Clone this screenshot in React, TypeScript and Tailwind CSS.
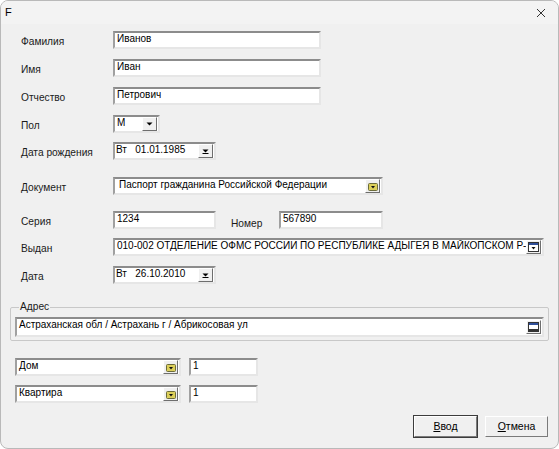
import React from "react";

const font = { fontFamily: '"Liberation Sans", Arial, sans-serif' };

const sunken =
  "bg-white border-2 border-t-[#8c8c8c] border-l-[#a0a0a0] border-b-[#e6e6e6] border-r-[#e6e6e6]";

const ArrowIcon = ({ bar }: { bar?: boolean }) => (
  <svg width="9" height="8" viewBox="0 0 9 8">
    <path d="M1.5 2.5h6L4.5 5.5z" fill="#000" />
    {bar && <rect x="1.5" y="6" width="6" height="1" fill="#000" />}
  </svg>
);

const FolderIcon = () => (
  <svg width="10" height="9" viewBox="0 0 10 9">
    <rect x="0.5" y="1.5" width="9" height="7" rx="1" fill="#dccf5a" stroke="#6b6b3a" />
    <path d="M3 4h4L5 6.5z" fill="#111" />
  </svg>
);

const WinIcon = ({ arrow }: { arrow?: boolean }) => (
  <svg width="11" height="10" viewBox="0 0 11 10">
    <rect x="0.5" y="0.5" width="10" height="9" fill="#fff" stroke="#333" />
    <rect x="1" y="1" width="9" height="2" fill="#2f4f9a" />
    {arrow && <path d="M3.5 5h4L5.5 7.5z" fill="#111" />}
    {!arrow && <rect x="1" y="7" width="9" height="2" fill="#333" />}
  </svg>
);

const DropBtn = ({ children }: { children: React.ReactNode }) => (
  <div className="w-[15px] h-[14px] flex items-center justify-center bg-[#f0f0f0] border border-t-white border-l-white border-b-[#6e6e6e] border-r-[#6e6e6e]">
    {children}
  </div>
);

const Field = ({
  w,
  value,
  pad = "pl-[2px]",
  btn,
  h = "h-[18px]",
}: {
  w: string;
  value: string;
  pad?: string;
  btn?: React.ReactNode;
  h?: string;
}) => (
  <div className={`${w} ${h} shrink-0 ${sunken} flex items-center`}>
    <div className={`flex-1 min-w-0 overflow-hidden whitespace-pre text-[10px] leading-[12px] text-black ${pad} self-start`}>
      {value}
    </div>
    {btn && <div className="pr-[1px]">{btn}</div>}
  </div>
);

const Row = ({
  label,
  mt,
  children,
}: {
  label: string;
  mt: string;
  children: React.ReactNode;
}) => (
  <div className={`flex items-start ${mt}`}>
    <div className="w-[92px] pt-[4px] text-[10.2px] leading-[13px] text-[#1a1a1a]">{label}</div>
    {children}
  </div>
);

const Button = ({ first, rest, def }: { first: string; rest: string; def?: boolean }) => (
  <div
    className={`w-[65px] h-[23px] flex items-center justify-center text-[10.5px] bg-[#f0f0f0] ${
      def ? "border border-[#3c3c3c]" : "border border-[#f0f0f0]"
    }`}
  >
    <div className="w-full h-full flex items-center justify-center border border-t-white border-l-white border-b-[#7a7a7a] border-r-[#7a7a7a]">
      <span className="underline">{first}</span>
      <span>{rest}</span>
    </div>
  </div>
);

export default function App() {
  return (
    <div className="w-[559px] h-[449px] bg-white" style={font}>
      <div className="w-full h-full bg-[#f0f0f0] border border-[#b9b9b9] rounded-[8px] overflow-hidden flex flex-col">
        <div className="h-[23px] flex items-center justify-between px-[4px] bg-[#f3f3f3]">
          <span className="text-[11px] text-black">F</span>
          <svg width="10" height="10" viewBox="0 0 10 10" className="mr-[8px]">
            <path d="M1 1l8 8M9 1l-8 8" stroke="#333" strokeWidth="1" />
          </svg>
        </div>
        <div className="pl-[20px] flex flex-col">
          <Row label="Фамилия" mt="mt-[7px]">
            <Field w="w-[208px]" value="Иванов" />
          </Row>
          <Row label="Имя" mt="mt-[10px]">
            <Field w="w-[208px]" value="Иван" />
          </Row>
          <Row label="Отчество" mt="mt-[10px]">
            <Field w="w-[208px]" value="Петрович" />
          </Row>
          <Row label="Пол" mt="mt-[10px]">
            <Field w="w-[47px]" value="М" btn={<DropBtn><ArrowIcon /></DropBtn>} />
          </Row>
          <Row label="Дата рождения" mt="mt-[9px]">
            <Field
              w="w-[103px]"
              value="Вт   01.01.1985"
              pad="pl-[1px]"
              btn={<DropBtn><ArrowIcon bar /></DropBtn>}
            />
          </Row>
          <Row label="Документ" mt="mt-[17px]">
            <Field
              w="w-[270px]"
              value="Паспорт гражданина Российской Федерации"
              pad="pl-[4px]"
              btn={<DropBtn><FolderIcon /></DropBtn>}
            />
          </Row>
          <Row label="Серия" mt="mt-[16px]">
            <Field w="w-[103px]" value="1234" />
            <div className="w-[63px] pl-[15px] pt-[6px] text-[10.2px] leading-[13px] text-[#1a1a1a]">Номер</div>
            <Field w="w-[104px]" value="567890" />
          </Row>
          <Row label="Выдан" mt="mt-[8px]">
            <Field
              w="w-[431px]"
              value="010-002 ОТДЕЛЕНИЕ ОФМС РОССИИ ПО РЕСПУБЛИКЕ АДЫГЕЯ В МАЙКОПСКОМ Р-НЕ"
              btn={<DropBtn><WinIcon arrow /></DropBtn>}
            />
          </Row>
          <Row label="Дата" mt="mt-[10px]">
            <Field
              w="w-[103px]"
              value="Вт   26.10.2010"
              pad="pl-[1px]"
              btn={<DropBtn><ArrowIcon bar /></DropBtn>}
            />
          </Row>
        </div>
        <fieldset className="mx-[9px] mt-[17px] border border-[#c8c8c8] rounded-[2px] px-[4px] pb-[3px]">
          <legend className="ml-[4px] px-[1px] text-[10.2px] leading-[12px] text-[#1a1a1a]">Адрес</legend>
          <div className="mt-[4px]">
            <Field
              w="w-full"
              h="h-[20px]"
              value="Астраханская обл / Астрахань г / Абрикосовая ул"
              btn={<DropBtn><WinIcon /></DropBtn>}
            />
          </div>
        </fieldset>
        <div className="pl-[14px] flex flex-col">
          <div className="flex mt-[17px] gap-[8px]">
            <Field w="w-[166px]" value="Дом" btn={<DropBtn><FolderIcon /></DropBtn>} />
            <Field w="w-[69px]" value="1" />
          </div>
          <div className="flex mt-[9px] gap-[8px]">
            <Field w="w-[166px]" value="Квартира" btn={<DropBtn><FolderIcon /></DropBtn>} />
            <Field w="w-[69px]" value="1" />
          </div>
        </div>
        <div className="flex justify-end gap-[6px] pr-[9px] mt-[12px]">
          <Button first="В" rest="вод" def />
          <Button first="О" rest="тмена" />
        </div>
      </div>
    </div>
  );
}
